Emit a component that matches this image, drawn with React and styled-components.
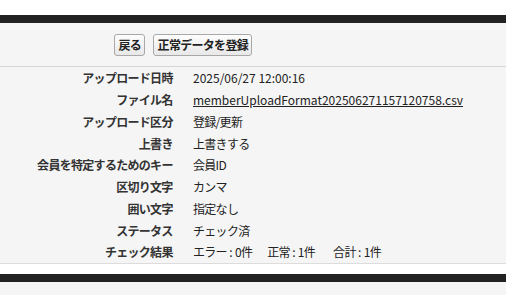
import React from "react";
import styled, { createGlobalStyle } from "styled-components";

const Global = createGlobalStyle`
  html, body { margin: 0; padding: 0; background: #f5f5f5; }
  body { font-family: "Noto Sans CJK JP", "Noto Sans", sans-serif; font-size: 12px; color: #222; }
`;

const Page = styled.div`
  width: 506px;
  height: 295px;
  overflow: hidden;
  display: flex;
  flex-direction: column;
  background: #f5f5f5;
`;

const TopSpace = styled.div`
  height: 15px;
  background: #fff;
`;

const DarkBar = styled.div`
  height: 8px;
  background: #222;
`;

const Panel = styled.section`
  background: #f5f5f5;
  border-bottom: 1px solid #dcdcdc;
`;

const Toolbar = styled.div`
  height: 44px;
  display: flex;
  align-items: center;
  gap: 8px;
  padding-left: 114px;
  border-bottom: 1px solid #d6d6d6;
  box-sizing: border-box;
`;

const Button = styled.button`
  height: 22px;
  padding: 0 3px 0 3.5px;
  font-family: "Noto Sans CJK JP", sans-serif;
  font-size: 12px;
  font-weight: bold;
  letter-spacing: -0.7px;
  color: #222;
  background: linear-gradient(#fdfdfd, #e8e8e8);
  border: 1px solid #a8a8a8;
  border-radius: 3px;
  line-height: 18px;
  cursor: pointer;
`;

const Table = styled.dl`
  margin: 0;
  display: grid;
  grid-template-columns: 172px 1fr;
  grid-auto-rows: 21.75px;
  column-gap: 21px;
  align-items: center;
`;

const Label = styled.dt`
  text-align: right;
  font-weight: bold;
  color: #333;
  white-space: nowrap;
  letter-spacing: -0.7px;
  margin-right: -0.7px;
`;

const Value = styled.dd`
  margin: 0;
  white-space: nowrap;
  color: #222;
  letter-spacing: ${(p) => (p.$tight ? "-0.7px" : "0")};
`;

const FileLink = styled.a`
  color: #222;
  text-decoration: underline;
`;

const Colon = styled.span`
  display: inline-block;
  width: 8px;
  text-align: center;
  letter-spacing: 0;
`;

const Count = styled.span`
  display: inline-block;
  margin-left: ${(p) => p.$gap || 0}px;
`;

const WhiteGap = styled.div`
  height: 10px;
  background: #fff;
`;

const Rest = styled.div`
  flex: 1;
  background: #f5f5f5;
`;

const results = [
  ["エラー", "0", 0],
  ["正常", "1", 15],
  ["合計", "1", 18],
];

const rows = [
  ["アップロード日時", "2025/06/27 12:00:16", false],
  ["ファイル名", "link", false],
  ["アップロード区分", "登録/更新", true],
  ["上書き", "上書きする", true],
  ["会員を特定するためのキー", "会員ID", true],
  ["区切り文字", "カンマ", true],
  ["囲い文字", "指定なし", true],
  ["ステータス", "チェック済", true],
  ["チェック結果", "result", true],
];

export default function App() {
  return (
    <Page>
      <Global />
      <TopSpace />
      <DarkBar />
      <Panel>
        <Toolbar>
          <Button>戻る</Button>
          <Button>正常データを登録</Button>
        </Toolbar>
        <Table>
          {rows.map(([k, v, tight]) => (
            <React.Fragment key={k}>
              <Label>{k}</Label>
              <Value $tight={tight}>
                {v === "link" ? (
                  <FileLink href="#">memberUploadFormat202506271157120758.csv</FileLink>
                ) : v === "result" ? (
                  results.map(([name, n, gap]) => (
                    <Count key={name} $gap={gap}>
                      {name}
                      <Colon>:</Colon>
                      {n}件
                    </Count>
                  ))
                ) : (
                  v
                )}
              </Value>
            </React.Fragment>
          ))}
        </Table>
      </Panel>
      <WhiteGap />
      <DarkBar />
      <Rest />
    </Page>
  );
}
